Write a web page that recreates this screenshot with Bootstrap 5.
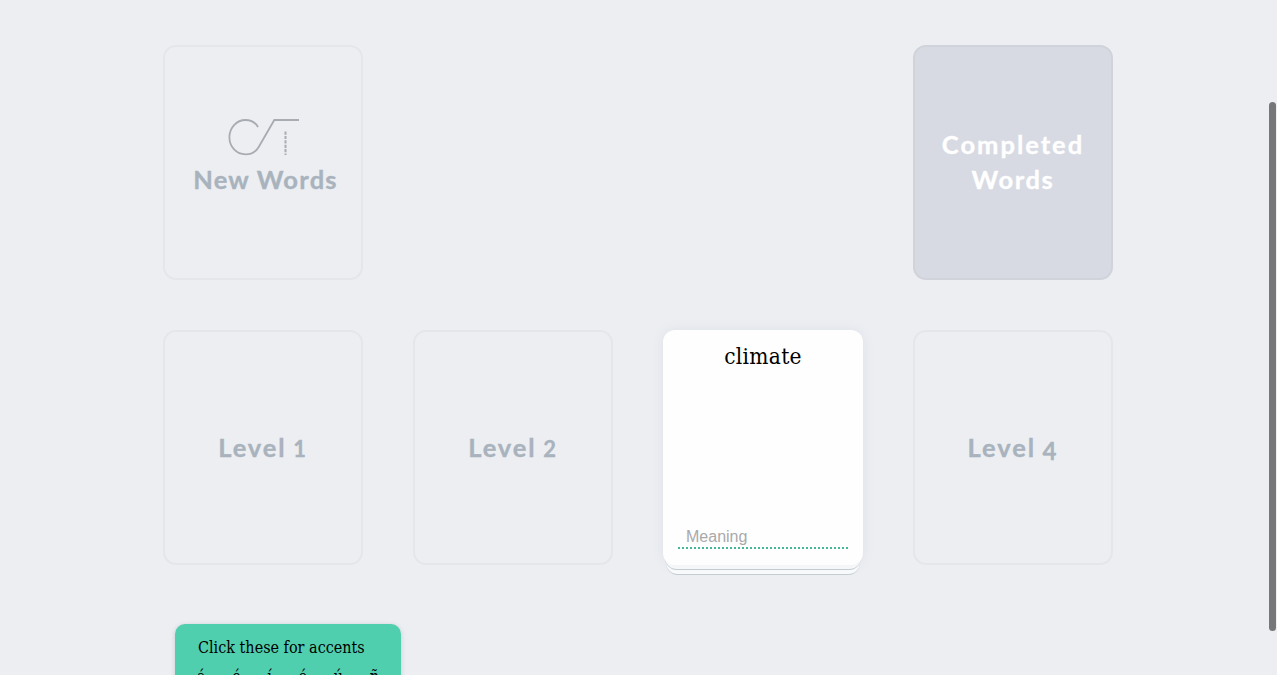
<!DOCTYPE html>
<html lang="en">
<head>
<meta charset="utf-8">
<meta name="viewport" content="width=device-width, initial-scale=1">
<title>Word cards</title>
<link rel="stylesheet" href="https://cdn.jsdelivr.net/npm/bootstrap@5.3.0/dist/css/bootstrap.min.css">
<style>
html, body { height: 100%; overflow: hidden; }
body { background: #eceef2; color: #000; }
.board { width: 950px; height: 675px; overflow: hidden; margin-left: 163px; padding-top: 45px; }
.decks { display: grid; grid-template-columns: repeat(4, 200px); gap: 50px; }
.deck { height: 235px; border: 2px solid #e4e6ea; border-radius: 13px; color: #a9b3bd; font: 700 25.5px/35px Lato, "Open Sans", sans-serif; letter-spacing: 2px; white-space: nowrap; -webkit-text-stroke: .35px currentColor; }
.deck-done { grid-column: 4; background: #d7dae2; border-color: #d0d3da; color: #fff; padding-bottom: 2px; }
.deck-logo { margin: 71px 0 0 2px; }
.fit-new { margin-top: 6px; padding-left: 5px; letter-spacing: 1.25px; }
.fit-words { letter-spacing: 1.6px; }
.level { padding-top: 98px; letter-spacing: 1.9px; word-spacing: -1.5px; }
.old { font-size: .86em; }
.old-low { position: relative; top: 3px; font-size: .94em; }
.slab { font-family: "DejaVu Serif Condensed", "DejaVu Serif", serif; font-stretch: condensed; }
.pile { height: 235px; }
.under { position: absolute; bottom: -5px; left: 2px; right: 2px; height: 60px; background: #fafbfc; border-bottom: 1px solid #c5ccd2; border-radius: 12px; }
.under-last { bottom: -10px; left: 3px; right: 3px; }
.word-card { height: 235px; background: #fefefe; border-radius: 12px; padding: 8px 15px 16px; box-shadow: 0 0 12px rgba(120,130,150,.1); }
.word { font-size: 22.5px; line-height: 36px; letter-spacing: .3px; }
.meaning { width: 170px; height: 26px; border: 0; border-bottom: 2px dotted #46b796; background: none; padding: 3px 8px 0; font: 16px/21px "Liberation Sans", sans-serif; outline: 0; }
.meaning::placeholder { color: #a9a9ac; opacity: 1; }
.accents { width: 226px; height: 120px; margin: 59px 0 0 12px; background: #50cfae; border-radius: 10px; padding: 12px 22px; box-shadow: 0 1px 5px rgba(60,70,90,.2); }
.accent-title { font-size: 16px; line-height: 24px; white-space: nowrap; padding-left: 1px; }
.keys { width: 182px; margin-top: 5px; font-size: 16px; line-height: 24px; }
.thumb { position: fixed; left: 1269px; top: 102px; width: 7px; height: 529px; border-radius: 4px; background: #767779; }
</style>
</head>
<body>
<main class="board">
  <section class="decks">
    <div class="deck d-flex flex-column align-items-center">
      <svg class="deck-logo flex-shrink-0" width="72" height="38" viewBox="0 0 72 38" fill="none" stroke="#a9abb2" stroke-width="1.8"><path d="M30 9.200C27.500 4.500 22.600 2 17.500 2C8.500 2 1.400 9.700 1.400 19.300S8.500 36.300 17.500 36.300C23 36.300 27.800 34 30.700 29L46.300 2H71"/><path d="M57.500 13.500V37" stroke-width="2" stroke-dasharray="3.200 1.200"/></svg>
      <span class="fit-new">New Words</span>
    </div>
    <div class="deck deck-done d-flex align-items-center justify-content-center text-center"><span>Completed<br><span class="fit-words">Words</span></span></div>
    <div class="deck level text-center">Level <span class="old">1</span></div>
    <div class="deck level text-center">Level <span class="old">2</span></div>
    <div class="pile position-relative">
      <div class="under under-last"></div>
      <div class="under"></div>
      <div class="word-card slab position-relative d-flex flex-column align-items-center justify-content-between">
        <div class="word">climate</div>
        <input class="meaning" type="text" placeholder="Meaning" aria-label="Meaning">
      </div>
    </div>
    <div class="deck level text-center">Level <span class="old-low">4</span></div>
  </section>
  <section class="accents slab">
    <div class="accent-title">Click these for accents</div>
    <div class="keys d-flex justify-content-between"><span>á</span><span>é</span><span>í</span><span>ó</span><span>ú</span><span>ñ</span></div>
  </section>
</main>
<div class="thumb"></div>
<script src="https://cdn.jsdelivr.net/npm/bootstrap@5.3.0/dist/js/bootstrap.bundle.min.js"></script>
</body>
</html>
